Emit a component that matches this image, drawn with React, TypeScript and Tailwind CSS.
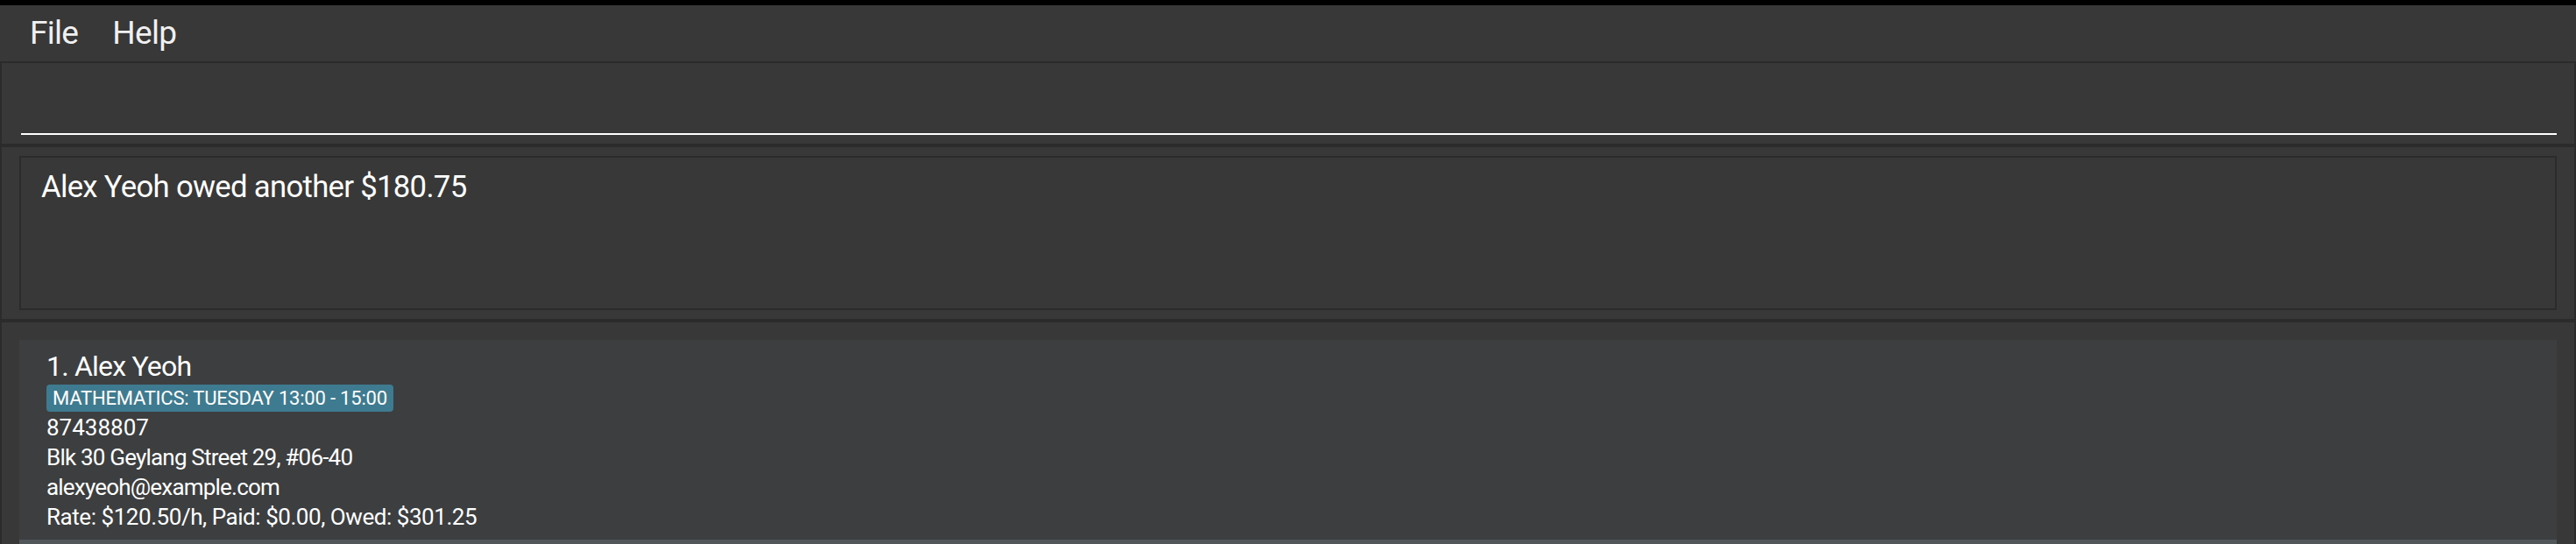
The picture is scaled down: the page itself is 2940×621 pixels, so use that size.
import React from "react";

export default function App() {
  const font = { fontFamily: "Roboto, 'Noto Sans', sans-serif" };
  return (
    <div className="w-full h-[621px] bg-[#383838] flex flex-col overflow-hidden text-white" style={font}>
      <div className="h-[6px] bg-black shrink-0" />
      <div className="h-[64px] shrink-0 flex items-center pl-[34px] gap-[39px] text-[37px] tracking-[-0.7px] text-[#f0f0f0]">
        <span>File</span>
        <span>Help</span>
      </div>
      <div className="h-[2px] bg-[#2b2b2b] shrink-0" />
      <div className="flex-1 flex flex-col border-x-2 border-[#2b2b2b] min-h-0">
        <div className="h-[92px] shrink-0 pl-[22px] pr-[20px] pb-[10px] flex flex-col justify-end">
          <div className="h-[80px] border-b-2 border-white" />
        </div>
        <div className="h-[4px] bg-[#2b2b2b] shrink-0" />
        <div className="h-[196px] shrink-0 px-[20px] py-[10px]">
          <div className="h-full border-2 border-[#2b2b2b] pl-[23px] pt-[12px] text-[34.7px] leading-[42px] tracking-[-0.7px]">
            Alex Yeoh owed another $180.75
          </div>
        </div>
        <div className="h-[4px] bg-[#2b2b2b] shrink-0" />
        <div className="flex-1 px-[20px] pt-[20px] flex flex-col min-h-0">
          <div className="h-[228px] shrink-0 bg-[#3c3e3f] pl-[31px] pt-[10px]">
            <div className="text-[32px] leading-[40px] tracking-[-0.8px]">1. Alex Yeoh</div>
            <div className="flex mt-[1px]">
              <span className="bg-[#3e7b91] rounded-[4px] px-[7px] h-[31px] flex items-center text-[22px] tracking-[-0.2px]">
                MATHEMATICS: TUESDAY 13:00 - 15:00
              </span>
            </div>
            <div className="text-[26px] leading-[34px] mt-[1px] tracking-[-0.6px]">
              <div className="tracking-[0px]">87438807</div>
              <div className="tracking-[-0.8px]">Blk 30 Geylang Street 29, #06-40</div>
              <div className="tracking-[-0.8px]">alexyeoh@example.com</div>
              <div className="tracking-[-0.45px]">Rate: $120.50/h, Paid: $0.00, Owed: $301.25</div>
            </div>
          </div>
          <div className="h-[40px] shrink-0 bg-[#515658]" />
        </div>
      </div>
    </div>
  );
}
